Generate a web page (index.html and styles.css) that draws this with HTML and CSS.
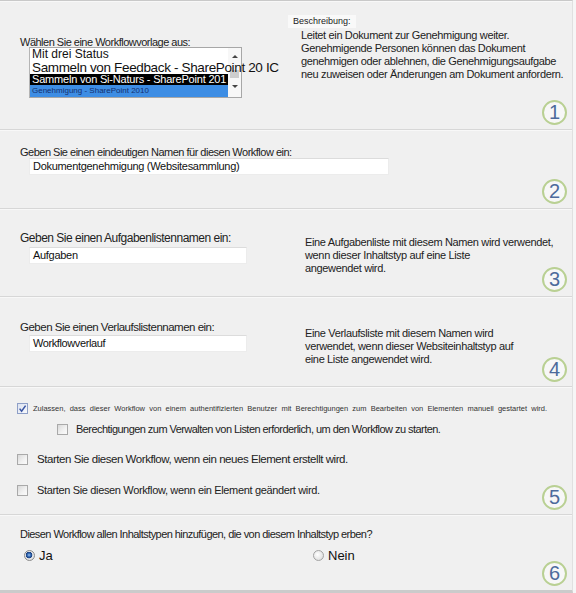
FILE: index.html
```html
<!DOCTYPE html>
<html lang="de">
<head>
<meta charset="utf-8">
<title>Workflow hinzufügen</title>
<link rel="stylesheet" href="styles.css">
</head>
<body>
<div class="page">
  <section class="sec sec1">
    <div class="col-left">
      <div class="label l1">Wählen Sie eine Workflowvorlage aus:</div>
      <div class="listbox">
        <div class="items">
          <div class="item i1">Mit drei Status</div>
          <div class="item i2">Sammeln von Feedback - SharePoint 20 IC</div>
          <div class="item i3">Sammeln von Si-Naturs - SharePoint 201</div>
          <div class="item i4">Genehmigung - SharePoint 2010</div>
        </div>
        <div class="scrollbar">
          <span class="arrow up"></span>
          <span class="thumb"></span>
          <span class="arrow down"></span>
        </div>
      </div>
    </div>
    <div class="col-right">
      <div class="desc-title">Beschreibung:</div>
      <div class="desc desc1">Leitet ein Dokument zur Genehmigung weiter.<br>Genehmigende Personen können das Dokument<br>genehmigen oder ablehnen, die Genehmigungsaufgabe<br>neu zuweisen oder Änderungen am Dokument anfordern.</div>
    </div>
    <span class="step">1</span>
  </section>

  <section class="sec sec2">
    <div class="label l2">Geben Sie einen eindeutigen Namen für diesen Workflow ein:</div>
    <div class="input in-wide">Dokumentgenehmigung (Websitesammlung)</div>
    <span class="step">2</span>
  </section>

  <section class="sec sec3 split">
    <div class="col-left">
      <div class="label l3">Geben Sie einen Aufgabenlistennamen ein:</div>
      <div class="input in-short t-aufgaben">Aufgaben</div>
    </div>
    <div class="desc desc3">Eine Aufgabenliste mit diesem Namen wird verwendet,<br>wenn dieser Inhaltstyp auf eine Liste<br>angewendet wird.</div>
    <span class="step">3</span>
  </section>

  <section class="sec sec4 split">
    <div class="col-left">
      <div class="label l4">Geben Sie einen Verlaufslistennamen ein:</div>
      <div class="input in-short t-verlauf">Workflowverlauf</div>
    </div>
    <div class="desc desc4">Eine Verlaufsliste mit diesem Namen wird<br>verwendet, wenn dieser Websiteinhaltstyp auf<br>eine Liste angewendet wird.</div>
    <span class="step">4</span>
  </section>

  <section class="sec sec5">
    <div class="row r1">
      <span class="cb checked"><svg viewBox="0 0 11 11" width="11" height="11"><path d="M2.6 5.6 L4.6 8.2 L8.6 2.6" stroke="#3a55a3" stroke-width="1.5" fill="none"/></svg></span>
      <span class="rtext t1">Zulassen, dass dieser Workflow von einem authentifizierten Benutzer mit Berechtigungen zum Bearbeiten von Elementen manuell gestartet wird.</span>
    </div>
    <div class="row r2">
      <span class="cb"></span>
      <span class="rtext t2">Berechtigungen zum Verwalten von Listen erforderlich, um den Workflow zu starten.</span>
    </div>
    <div class="row r3">
      <span class="cb"></span>
      <span class="rtext t3">Starten Sie diesen Workflow, wenn ein neues Element erstellt wird.</span>
    </div>
    <div class="row r4">
      <span class="cb"></span>
      <span class="rtext t4">Starten Sie diesen Workflow, wenn ein Element geändert wird.</span>
    </div>
    <span class="step">5</span>
  </section>

  <section class="sec sec6">
    <div class="label l6">Diesen Workflow allen Inhaltstypen hinzufügen, die von diesem Inhaltstyp erben?</div>
    <div class="radios">
      <div class="opt"><span class="radio on"></span><span class="otext">Ja</span></div>
      <div class="opt"><span class="radio"></span><span class="otext">Nein</span></div>
    </div>
    <span class="step">6</span>
  </section>
</div>
</body>
</html>
```

FILE: styles.css
```css
html, body {
  margin: 0;
  padding: 0;
}
body {
  background: #f6f6f6;
  font-family: "Liberation Sans", Arial, sans-serif;
  color: #222;
  width: 576px;
  height: 593px;
  overflow: hidden;
}
.page {
  width: 572px;
  border-top: 1px solid #c9c9c9;
  border-bottom: 3px solid #cbcbcb;
  border-right: 1px solid #e0e0e0;
  background: #f0f0f0;
}
.sec {
  position: relative;
  box-sizing: border-box;
  border-bottom: 1px solid #d7d7d7;
  box-shadow: inset 0 1px 0 #f8f8f8;
}
.sec6 { border-bottom: none; }
.sec1 { height: 129px; display: grid; grid-template-columns: 288px 1fr; }
.sec2 { height: 79px; padding: 16px 0 0 20px; }
.sec3 { height: 88px; }
.sec4 { height: 90px; }
.sec5 { height: 128px; padding-top: 14px; }
.sec6 { height: 75px; padding: 13px 0 0 20px; }

.label {
  white-space: nowrap;
  line-height: 12px;
}
.l1, .l2 { font-size: 11px; letter-spacing: -0.5px; }
.l3 { font-size: 12px; letter-spacing: -0.5px; line-height: 14px; }
.l4 { font-size: 11.5px; letter-spacing: -0.5px; line-height: 13px; }
.l6 { font-size: 11px; letter-spacing: -0.55px; }

/* Section 1 */
.sec1 .col-left { padding: 35px 0 0 20px; }
.listbox {
  margin: -1px 0 0 9px;
  width: 213px;
  height: 51px;
  box-sizing: border-box;
  border: 1px solid #a7a7a7;
  border-left-color: #b4b4b4;
  background: #fff;
  display: flex;
}
.items { width: 198px; }
.item {
  white-space: nowrap;
  padding-left: 2px;
  color: #111;
}
.i1 { height: 13px; line-height: 13px; font-size: 12px; }
.i2 {
  height: 13px; line-height: 13px; font-size: 13.5px; letter-spacing: -0.35px;
  position: relative; z-index: 2;
}
.i3 {
  height: 11px; line-height: 11px; font-size: 11px; letter-spacing: -0.2px;
  background: #000; color: #fff; overflow: hidden;
}
.i4 {
  height: 12px; line-height: 12px; font-size: 8px;
  background: #3d8de4; color: #15306e;
}
.scrollbar {
  width: 13px;
  display: flex;
  flex-direction: column;
  align-items: center;
  background: #f7f7f7;
}
.arrow { width: 0; height: 0; border-left: 3px solid transparent; border-right: 3px solid transparent; }
.arrow.up { border-bottom: 3px solid #444; margin-top: 7px; }
.arrow.down { border-top: 3px solid #444; margin-top: 7px; }
.thumb { width: 9px; height: 8px; background: #cdcdcd; margin-top: 12px; }

.col-right { display: flex; flex-direction: column; align-items: flex-start; }
.desc-title {
  margin-top: 14px;
  padding: 0 5px;
  height: 13px;
  line-height: 13px;
  font-size: 9px;
  background: #f9f9f9;
  color: #222;
}
.desc {
  font-size: 11px;
  letter-spacing: -0.35px;
  line-height: 13px;
  white-space: nowrap;
  color: #222;
}
.desc1 { margin-left: 13px; margin-top: 1px; }

/* inputs */
.input {
  box-sizing: border-box;
  margin-left: 9px;
  background: #fff;
  border: 1px solid #ececec;
  border-top-color: #dcdcdc;
  padding-left: 3px;
  font-size: 11px;
  letter-spacing: -0.3px;
  white-space: nowrap;
  color: #111;
}
.in-wide { width: 360px; height: 17px; line-height: 15px; }
.in-short { width: 218px; height: 17px; line-height: 15px; margin-top: 2px; }
.t-verlauf { letter-spacing: -0.4px; }

/* split sections */
.split { display: grid; grid-template-columns: 305px 1fr; }
.sec3 .col-left { padding: 22px 0 0 20px; }
.sec4 .col-left { padding: 24px 0 0 20px; }
.sec4 .in-short { margin-top: 1px; }
.desc3 { padding-top: 27px; }
.desc4 { padding-top: 30px; }

/* section 5 */
.row { display: flex; align-items: center; height: 14px; white-space: nowrap; }
.r1 { padding-left: 17px; }
.r2 { padding-left: 57px; margin-top: 7px; }
.r3 { padding-left: 17px; margin-top: 16px; }
.r4 { padding-left: 17px; margin-top: 17px; }
.cb {
  display: inline-block;
  width: 11px;
  height: 11px;
  box-sizing: border-box;
  border: 1px solid #a9a9a9;
  background: linear-gradient(135deg, #d9d9d9 0%, #f2f2f2 60%, #fbfbfb 100%);
  flex: none;
}
.cb svg { display: block; margin: -1px 0 0 -1px; }
.cb.checked { border-color: #8e9fc7; background: linear-gradient(135deg, #dde3f0, #f8f9fc); }
.rtext { color: #222; }
.t1 { margin-left: 5px; font-size: 7.5px; word-spacing: 2.1px; color: #333; }
.t2 { margin-left: 8px; font-size: 11px; letter-spacing: -0.55px; }
.t3 { margin-left: 9px; font-size: 11.5px; letter-spacing: -0.45px; }
.t4 { margin-left: 9px; font-size: 11px; letter-spacing: -0.35px; }

/* section 6 */
.radios {
  display: grid;
  grid-template-columns: 289px 1fr;
  padding-left: 4px;
  margin-top: 8px;
}
.opt { display: flex; align-items: center; height: 14px; }
.radio {
  width: 11px;
  height: 11px;
  box-sizing: border-box;
  border-radius: 50%;
  border: 1px solid #a3a3a3;
  background: radial-gradient(circle at 40% 40%, #ffffff 0, #e6e6e6 60%, #d4d4d4 100%);
  flex: none;
}
.radio.on {
  border-color: #8a8a8a;
  background: radial-gradient(circle at 45% 45%, #9cc4ee 0, #2e64b0 1.8px, #1c3f7c 3px, #e9e9e9 3.6px, #d6d6d6 100%);
}
.otext { margin-left: 4px; font-size: 13px; color: #111; }

/* step badges */
.step {
  position: absolute;
  right: 5px;
  bottom: 4px;
  width: 25px;
  height: 25px;
  box-sizing: border-box;
  border: 2px solid #b9d093;
  border-radius: 50%;
  background: #f7f7f7;
  color: #4d6b9c;
  font-size: 20px;
  line-height: 21px;
  text-align: center;
}
```
